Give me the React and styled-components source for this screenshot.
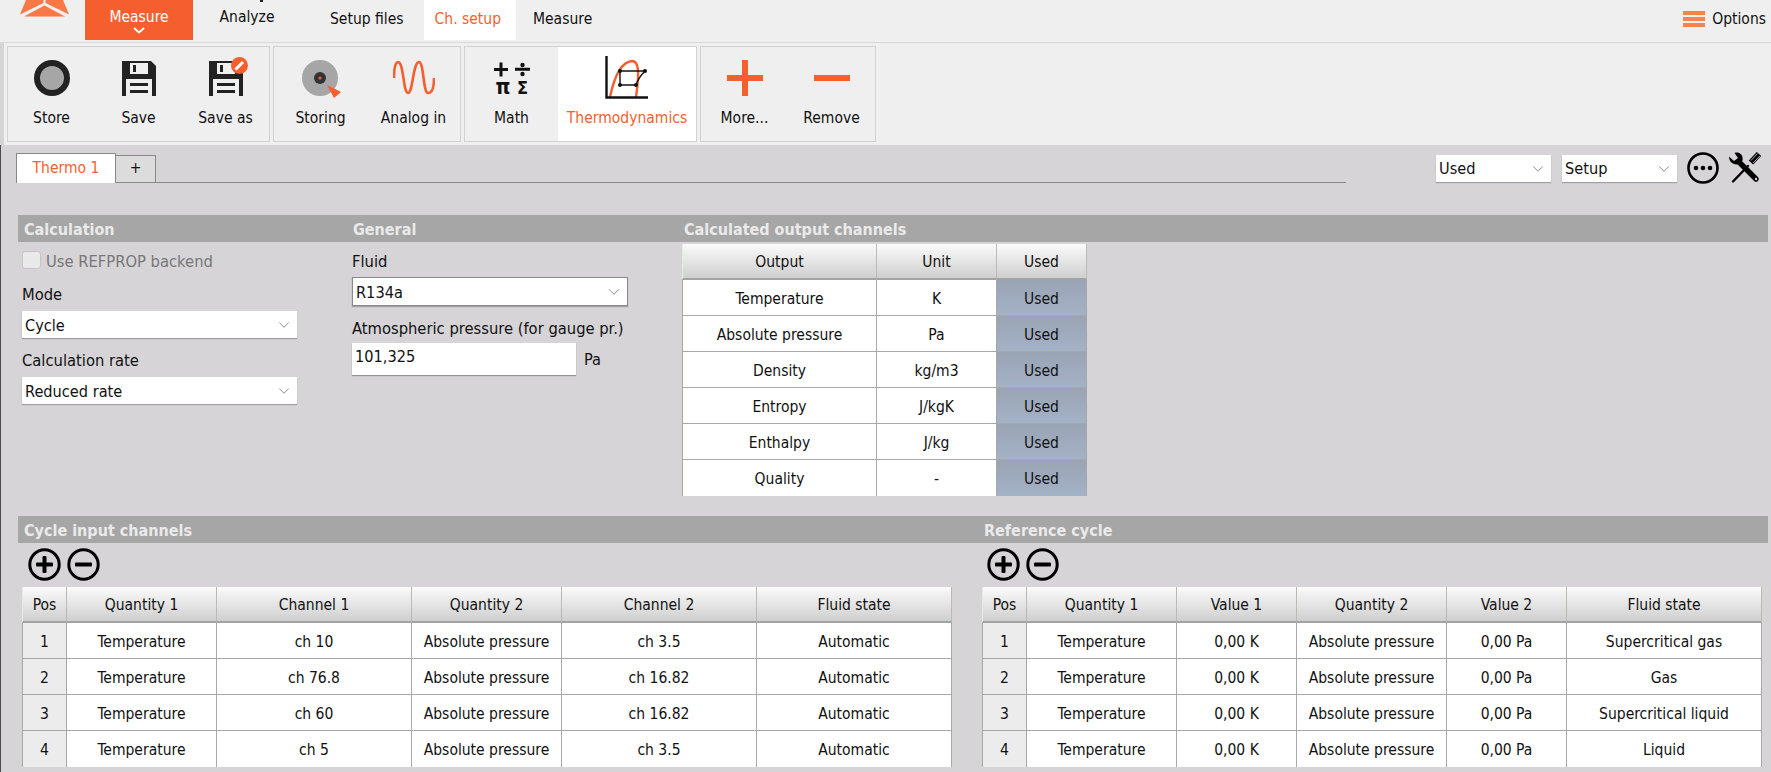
import React from 'react';
import styled, { createGlobalStyle } from 'styled-components';
import { ChevronDown } from 'lucide-react';

const orange = '#f55f2e';
const face = '"DejaVu Sans Condensed", "DejaVu Sans", sans-serif';

const Global = createGlobalStyle`
  html, body { margin: 0; padding: 0; background: #d6d4d7; }
  * { box-sizing: border-box; }
`;

/* ---------- icons ---------- */

const Logo = () => (
  <LogoSvg viewBox="0 0 49 18">
    <polygon points="6,0 23.5,0 23.5,3 0,14.5" fill="#f97845" />
    <polygon points="43,0 25.5,0 25.5,3 49,14.5" fill="#f97845" />
    <polygon points="24.5,5.5 4,16.5 45,16.5" fill="#f97845" />
  </LogoSvg>
);

const StoreIcon = () => (
  <svg width="36" height="36" viewBox="0 0 36 36">
    <circle cx="18" cy="18" r="15" fill="#a6a6a6" stroke="#222" strokeWidth="6" />
  </svg>
);

const FloppyIcon = () => (
  <svg width="34" height="36" viewBox="0 0 34 36">
    <path d="M0 1h29l5 5v30H0z" fill="#222" />
    <rect x="8" y="3" width="18" height="11" fill="#efefef" />
    <rect x="11" y="5" width="3" height="7" fill="#222" />
    <rect x="4" y="19" width="26" height="17" fill="#efefef" />
    <rect x="8" y="23" width="18" height="3" fill="#222" />
    <rect x="8" y="30" width="18" height="3" fill="#222" />
  </svg>
);

const SaveAsIcon = () => (
  <IconStack>
    <FloppyIcon />
    <Badge viewBox="0 0 17 17">
      <circle cx="8.5" cy="8.5" r="8.5" fill={orange} />
      <path d="M4.5 12.5 L12 5" stroke="#fff" strokeWidth="3" />
    </Badge>
  </IconStack>
);

const StoringIcon = () => (
  <StoringSvg width="40" height="40" viewBox="0 0 40 40">
    <circle cx="18" cy="18" r="18" fill="#a6a6a6" />
    <circle cx="18" cy="18" r="6" fill="#333" />
    <circle cx="18" cy="18" r="1.6" fill={orange} />
    <polygon points="25,25 39,32 32,38" fill={orange} />
  </StoringSvg>
);

const SineIcon = () => (
  <svg width="42" height="36" viewBox="0 0 42 36">
    <path
      d="M1 18 C1 6 3 2 5 2 C11 2 10 33 15 33 C20 33 20 2 26 2 C31 2 30 33 35 33 C39 33 41 28 41 18"
      fill="none"
      stroke={orange}
      strokeWidth="2.6"
    />
  </svg>
);

const MathIcon = () => (
  <svg width="36" height="44" viewBox="0 -4 36 44">
    <path d="M0 9.5h14M7 2.5v14M21 9.3h15" stroke="#111" strokeWidth="3" fill="none" />
    <circle cx="28.5" cy="5" r="2.2" fill="#111" />
    <circle cx="28.5" cy="14" r="2.2" fill="#111" />
    <MathText x="9" y="34" textAnchor="middle" $size={21}>π</MathText>
    <MathText x="28.5" y="34" textAnchor="middle" $size={18}>Σ</MathText>
  </svg>
);

const ThermoIcon = () => (
  <svg width="44" height="44" viewBox="0 0 44 44">
    <path d="M5 41 C9 22 16 6 27 5 C36 5 33 26 31 41" fill="none" stroke={orange} strokeWidth="2.4" />
    <path d="M1.5 0v41.5H43" fill="none" stroke="#111" strokeWidth="2.4" />
    <path d="M15 15H40C35 20 33 23 31 29H15z" fill="none" stroke="#111" strokeWidth="1.4" />
    <circle cx="15" cy="15" r="2" fill="#111" />
    <circle cx="40" cy="15" r="2" fill="#111" />
    <circle cx="31" cy="29" r="2" fill="#111" />
    <circle cx="15" cy="29" r="2" fill="#111" />
  </svg>
);

const PlusIcon = () => (
  <svg width="36" height="36" viewBox="0 0 36 36">
    <path d="M15 0h6v15h15v6H21v15h-6V21H0v-6h15z" fill={orange} />
  </svg>
);

const MinusIcon = () => (
  <svg width="36" height="36" viewBox="0 0 36 36">
    <rect y="15" width="36" height="6" fill={orange} />
  </svg>
);

const CircleBtn = ({ kind }) => (
  <svg width="33" height="33" viewBox="0 0 33 33">
    <circle cx="16.5" cy="16.5" r="14.7" fill="none" stroke="#000" strokeWidth="3" />
    <rect x="8" y="14.5" width="17" height="4" rx="1" fill="#000" />
    {kind === 'plus' && <rect x="14.5" y="8" width="4" height="17" rx="1" fill="#000" />}
  </svg>
);

const DotsIcon = () => (
  <svg width="32" height="32" viewBox="0 0 32 32">
    <circle cx="16" cy="16" r="14.5" fill="none" stroke="#000" strokeWidth="2.6" />
    <circle cx="9" cy="16" r="2.3" fill="#000" />
    <circle cx="16" cy="16" r="2.3" fill="#000" />
    <circle cx="23" cy="16" r="2.3" fill="#000" />
  </svg>
);

const ToolsIcon = () => (
  <svg width="34" height="32" viewBox="0 0 34 32">
    <path d="M11 10 L28 27" stroke="#000" strokeWidth="5.4" strokeLinecap="round" />
    <path
      d="M1 4.5 L6 9 L10 6 L6.5 1 C11 -0.5 15.5 2.5 14.5 8.5 L11 12 C6 13.5 1 10.5 1 4.5z"
      fill="#000"
    />
    <circle cx="28" cy="27" r="1.2" fill="#d6d4d7" />
    <path d="M31 2 L23 10.5" stroke="#000" strokeWidth="6" />
    <path d="M29.5 1.5 L23 8.5M32 4 L25 11" stroke="#d6d4d7" strokeWidth="0.8" />
    <path d="M20 14 L5 29.5" stroke="#000" strokeWidth="2.4" strokeLinecap="round" />
  </svg>
);

const Chevron = () => <ChevronDown size={18} strokeWidth={0.9} color="#555" />;

/* ---------- data ---------- */

const groups = [
  [
    { label: 'Store', icon: <StoreIcon />, w: 87 },
    { label: 'Save', icon: <FloppyIcon />, w: 87 },
    { label: 'Save as', icon: <SaveAsIcon />, w: 87 },
  ],
  [
    { label: 'Storing', icon: <StoringIcon />, w: 93 },
    { label: 'Analog in', icon: <SineIcon />, w: 93 },
  ],
  [
    { label: 'Math', icon: <MathIcon />, w: 93 },
    { label: 'Thermodynamics', icon: <ThermoIcon />, w: 138, active: true },
  ],
  [
    { label: 'More...', icon: <PlusIcon />, w: 87 },
    { label: 'Remove', icon: <MinusIcon />, w: 87 },
  ],
];

const outputs = [
  ['Temperature', 'K'],
  ['Absolute pressure', 'Pa'],
  ['Density', 'kg/m3'],
  ['Entropy', 'J/kgK'],
  ['Enthalpy', 'J/kg'],
  ['Quality', '-'],
];

const inputRows = [
  ['ch 10', 'ch 3.5'],
  ['ch 76.8', 'ch 16.82'],
  ['ch 60', 'ch 16.82'],
  ['ch 5', 'ch 3.5'],
];

const refStates = ['Supercritical gas', 'Gas', 'Supercritical liquid', 'Liquid'];

/* ---------- page ---------- */

const DataTable = ({ widths, head, rows, posCol, usedCol }) => (
  <Table>
    <colgroup>
      {widths.map((w, i) => (
        <Col key={i} $w={w} />
      ))}
    </colgroup>
    <thead>
      <tr>
        {head.map((h) => (
          <Th key={h}>{h}</Th>
        ))}
      </tr>
    </thead>
    <tbody>
      {rows.map((r, i) => (
        <tr key={i}>
          {r.map((c, j) => (
            <Td key={j} $pos={posCol && j === 0} $used={usedCol && j === r.length - 1}>
              {c}
            </Td>
          ))}
        </tr>
      ))}
    </tbody>
  </Table>
);

const App = () => {
  return (
    <Page>
      <Global />
      <TopBar>
        <Logo />
        <MainTab $active>
          Measure
          <TabChevron viewBox="0 0 12 7">
            <path d="M1 1l5 4.5L11 1" fill="none" stroke="#fff" strokeWidth="1.8" />
          </TabChevron>
        </MainTab>
        <MainTab $cutIcon>Analyze</MainTab>
        <SubTab $ml={29}>Setup files</SubTab>
        <SubTab $ml={20} $active>Ch. setup</SubTab>
        <SubTab $ml={17}>Measure</SubTab>
        <Options>
          <Burger>
            <i />
            <i />
            <i />
          </Burger>
          Options
        </Options>
      </TopBar>

      <Ribbon>
        {groups.map((g, i) => (
          <RibbonGroup key={i}>
            {g.map((b) => (
              <RibbonButton key={b.label} $w={b.w} $active={b.active}>
                <IconSlot>{b.icon}</IconSlot>
                {b.label}
              </RibbonButton>
            ))}
          </RibbonGroup>
        ))}
      </Ribbon>

      <Content>
        <TabRow>
          <TabStrip>
            <DocTab $active>Thermo 1</DocTab>
            <DocTab>+</DocTab>
          </TabStrip>
          <TabTools>
            <Select $w={115} $h={27}>Used<Chevron /></Select>
            <Select $w={115} $h={27}>Setup<Chevron /></Select>
            <DotsIcon />
            <ToolsIcon />
          </TabTools>
        </TabRow>

        <TopGrid>
          <section>
            <SectionTitle $pl={6}>Calculation</SectionTitle>
            <CalcBody>
              <CheckRow>
                <Check />
                <CheckText>Use REFPROP backend</CheckText>
              </CheckRow>
              <FieldLabel $mt={16}>Mode</FieldLabel>
              <Select $w={275} $h={27} $mt={8}>Cycle<Chevron /></Select>
              <FieldLabel $mt={13}>Calculation rate</FieldLabel>
              <Select $w={275} $h={27} $mt={8}>Reduced rate<Chevron /></Select>
            </CalcBody>
          </section>
          <section>
            <SectionTitle $pl={6}>General</SectionTitle>
            <GeneralBody>
              <FieldLabel>Fluid</FieldLabel>
              <Select $w={276} $h={29} $mt={7} $outlined>R134a<Chevron /></Select>
              <FieldLabel $mt={13}>Atmospheric pressure (for gauge pr.)</FieldLabel>
              <InputRow>
                <NumberBox>101,325</NumberBox>
                Pa
              </InputRow>
            </GeneralBody>
          </section>
          <section>
            <SectionTitle $pl={18}>Calculated output channels</SectionTitle>
            <OutputBody>
              <DataTable
                widths={[195, 120, 90]}
                head={['Output', 'Unit', 'Used']}
                rows={outputs.map((o) => [...o, 'Used'])}
                usedCol
              />
            </OutputBody>
          </section>
        </TopGrid>

        <BottomGrid>
          <section>
            <SectionTitle $pl={6}>Cycle input channels</SectionTitle>
            <AddRow $pl={10}>
              <CircleBtn kind="plus" />
              <CircleBtn kind="minus" />
            </AddRow>
            <TableWrap $ml={4}>
              <DataTable
                widths={[45, 150, 195, 150, 195, 195]}
                head={['Pos', 'Quantity 1', 'Channel 1', 'Quantity 2', 'Channel 2', 'Fluid state']}
                rows={inputRows.map((r, i) => [i + 1, 'Temperature', r[0], 'Absolute pressure', r[1], 'Automatic'])}
                posCol
              />
            </TableWrap>
          </section>
          <section>
            <SectionTitle $pl={24}>Reference cycle</SectionTitle>
            <AddRow $pl={27}>
              <CircleBtn kind="plus" />
              <CircleBtn kind="minus" />
            </AddRow>
            <TableWrap $ml={22}>
              <DataTable
                widths={[45, 150, 120, 150, 120, 195]}
                head={['Pos', 'Quantity 1', 'Value 1', 'Quantity 2', 'Value 2', 'Fluid state']}
                rows={refStates.map((s, i) => [i + 1, 'Temperature', '0,00 K', 'Absolute pressure', '0,00 Pa', s])}
                posCol
              />
            </TableWrap>
          </section>
        </BottomGrid>
      </Content>
    </Page>
  );
};

const Page = styled.div`
  width: 1771px;
  height: 772px;
  overflow: hidden;
  background: #d6d4d7;
  font-family: ${face};
  font-size: 15.5px;
  color: #111;
`;

const TopBar = styled.header`
  height: 43px;
  display: flex;
  align-items: flex-start;
  background: #efefef;
  border-bottom: 1px solid #d9d9d9;
`;

const LogoSvg = styled.svg`
  width: 49px;
  height: 18px;
  margin-left: 20px;
  margin-right: 16px;
`;

const MainTab = styled.div`
  position: relative;
  width: 108px;
  height: 40px;
  padding-top: 8px;
  line-height: 18px;
  text-align: center;
  background: ${(p) => (p.$active ? orange : 'transparent')};
  color: ${(p) => (p.$active ? '#fff' : '#111')};

  ${(p) =>
    p.$cutIcon &&
    `&::before {
      content: '';
      position: absolute;
      top: 0;
      left: 67px;
      width: 3px;
      height: 2px;
      background: #222;
    }`}
`;

const TabChevron = styled.svg`
  display: block;
  width: 12px;
  height: 7px;
  margin: 1px auto 0;
`;

const SubTab = styled.div`
  height: 40px;
  margin-left: ${(p) => p.$ml}px;
  padding: 10px ${(p) => (p.$active ? '15px' : '0')} 0 ${(p) => (p.$active ? '11px' : '0')};
  line-height: 18px;
  background: ${(p) => (p.$active ? '#fff' : 'transparent')};
  color: ${(p) => (p.$active ? orange : '#111')};
`;

const Options = styled.div`
  margin-left: auto;
  padding: 10px 5px 0 0;
  display: flex;
  align-items: center;
  gap: 7px;
  line-height: 18px;
`;

const Burger = styled.span`
  display: flex;
  flex-direction: column;
  gap: 2px;
  width: 22px;

  i {
    display: block;
    height: 4px;
    background: #f8834f;
  }
`;

const Ribbon = styled.div`
  height: 102px;
  margin-left: 4px;
  padding: 3px;
  display: flex;
  gap: 3px;
  background: #efefef;
`;

const RibbonGroup = styled.div`
  display: flex;
  border: 1px solid #d2d2d2;
`;

const RibbonButton = styled.div`
  width: ${(p) => p.$w}px;
  display: flex;
  flex-direction: column;
  align-items: center;
  padding-top: 6px;
  line-height: 18px;
  background: ${(p) => (p.$active ? '#fff' : 'transparent')};
  color: ${(p) => (p.$active ? orange : '#111')};
`;

const IconSlot = styled.div`
  height: 50px;
  margin-bottom: 6px;
  display: flex;
  align-items: center;
  justify-content: center;
`;

const IconStack = styled.div`
  position: relative;
  display: flex;
`;

const Badge = styled.svg`
  position: absolute;
  top: -3px;
  right: -5px;
  width: 17px;
  height: 17px;
`;

const StoringSvg = styled.svg`
  margin-left: 3px;
  margin-top: 4px;
`;

const MathText = styled.text`
  font-family: 'DejaVu Sans Condensed', 'DejaVu Sans', sans-serif;
  font-weight: 700;
  font-size: ${(p) => p.$size}px;
  fill: #111;
`;

const Content = styled.main`
  height: 627px;
  border-left: 1px solid #4d4d4d;
`;

const TabRow = styled.div`
  height: 70px;
  padding: 7px 0 0 15px;
  display: flex;
  align-items: flex-start;
`;

const TabStrip = styled.div`
  width: 1330px;
  height: 31px;
  display: flex;
  align-items: flex-end;
  border-bottom: 1px solid #888;
`;

const DocTab = styled.div`
  height: ${(p) => (p.$active ? 30 : 28)}px;
  width: ${(p) => (p.$active ? 100 : 40)}px;
  margin-bottom: -1px;
  padding-bottom: 2px;
  display: flex;
  align-items: center;
  justify-content: center;
  border: 1px solid #888;
  border-left-width: ${(p) => (p.$active ? 1 : 0)}px;
  border-bottom: ${(p) => (p.$active ? 'none' : '1px solid #888')};
  background: ${(p) => (p.$active ? '#fff' : '#dcdcdc')};
  color: ${(p) => (p.$active ? orange : '#111')};
`;

const TabTools = styled.div`
  margin-left: 90px;
  display: flex;
  align-items: center;
  height: 32px;

  & > div:nth-child(2) {
    margin-left: 11px;
    margin-right: 10px;
  }

  & > svg:last-child {
    margin-left: 9px;
  }
`;

const Select = styled.div`
  width: ${(p) => p.$w}px;
  height: ${(p) => p.$h}px;
  margin-top: ${(p) => p.$mt || 0}px;
  padding: 1px 4px 0 3px;
  display: flex;
  align-items: center;
  justify-content: space-between;
  font-size: 16.2px;
  background: #fff;
  border: ${(p) => (p.$outlined ? '1px solid #8a8a8a' : 'none')};
  box-shadow: 0 1px 1px rgba(0, 0, 0, 0.25);
`;

const TopGrid = styled.div`
  margin-left: 17px;
  margin-right: 3px;
  display: grid;
  grid-template-columns: 329px 319px 1fr;
  height: 281px;
`;

const SectionTitle = styled.h3`
  height: 27px;
  margin: 0;
  padding: 5px 0 0 ${(p) => p.$pl}px;
  line-height: 19px;
  font-size: 16px;
  font-weight: 700;
  background: #a6a6a6;
  color: #eaeaea;
`;

const CalcBody = styled.div`
  padding: 9px 0 0 4px;
`;

const GeneralBody = styled.div`
  padding: 10px 0 0 5px;
`;

const OutputBody = styled.div`
  padding: 2px 0 0 16px;
`;

const CheckRow = styled.div`
  height: 18px;
  display: flex;
  align-items: center;
  gap: 5px;
  font-size: 16.4px;
  line-height: 20px;
  color: #777;
`;

const CheckText = styled.span`
  padding-top: 3px;
`;

const Check = styled.span`
  width: 19px;
  height: 18px;
  border: 1px solid #c4c4c4;
  border-radius: 3px;
  background: #e9e9e9;
`;

const FieldLabel = styled.div`
  height: 18px;
  margin-top: ${(p) => p.$mt || 0}px;
  font-size: 16.4px;
  line-height: 20px;
  white-space: nowrap;
`;

const InputRow = styled.div`
  margin-top: 6px;
  display: flex;
  align-items: center;
  gap: 8px;
  font-size: 16.2px;
`;

const NumberBox = styled.div`
  width: 224px;
  height: 32px;
  padding: 5px 3px;
  line-height: 18px;
  background: #fff;
  box-shadow: 0 1px 1px rgba(0, 0, 0, 0.3);
`;

const BottomGrid = styled.div`
  margin-top: 20px;
  margin-left: 17px;
  margin-right: 3px;
  display: grid;
  grid-template-columns: 942px 1fr;
`;

const AddRow = styled.div`
  height: 38px;
  padding: 5px 0 0 ${(p) => p.$pl}px;
  display: flex;
  gap: 6px;
`;

const TableWrap = styled.div`
  margin-top: 6px;
  margin-left: ${(p) => p.$ml}px;
`;

const Table = styled.table`
  border-collapse: separate;
  border-spacing: 0;
  table-layout: fixed;
  text-align: center;
`;

const Col = styled.col`
  width: ${(p) => p.$w}px;
`;

const Th = styled.th`
  height: 36px;
  padding: 2px 0 0;
  font-weight: 400;
  background: linear-gradient(#fbfbfb, #cfcfcf);
  border-right: 1px solid #bdb9ac;
  border-bottom: 2px solid #a3a3a3;

  &:first-child {
    border-left: 1px solid #e8e8e8;
  }
`;

const Td = styled.td`
  height: 36px;
  padding: 2px 0 0;
  background: ${(p) =>
    p.$used ? 'linear-gradient(#99a4b4, #a4b2c7)' : p.$pos ? '#ececec' : '#fff'};
  border-right: 1px solid #a8a8a8;
  border-bottom: 1px solid #a8a8a8;

  &:first-child {
    border-left: 1px solid #a8a8a8;
  }

  tr:last-child > & {
    border-bottom: none;
  }
`;

export default App;
